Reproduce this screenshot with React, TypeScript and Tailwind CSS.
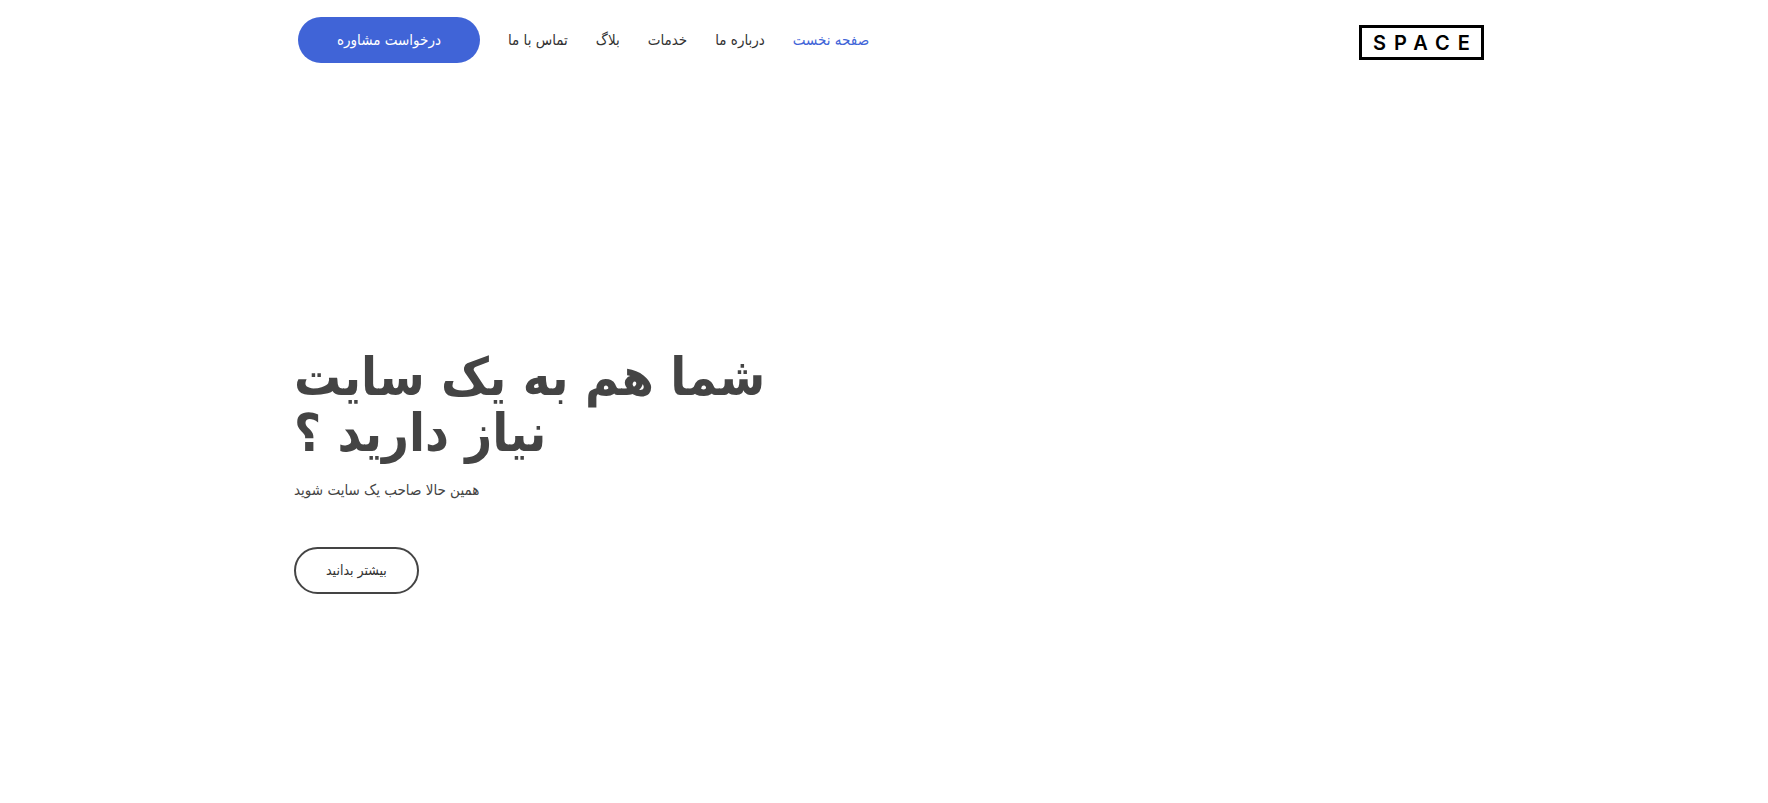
import React from 'react';

const links = [
  { title: 'صفحه نخست', active: true },
  { title: 'درباره ما' },
  { title: 'خدمات' },
  { title: 'بلاگ' },
  { title: 'تماس با ما' },
];

const Header = () => {
  return (
    <header className="flex items-start justify-between pt-[17px]">
      <a
        href="#"
        dir="ltr"
        className="mt-2 flex h-[35px] w-[125px] items-center justify-center border-3 border-black pl-2 font-['Inter'] text-xl font-semibold tracking-[8px] text-black"
      >
        SPACE
      </a>

      <div className="flex items-center gap-7 pl-1">
        <nav className="flex items-center gap-7 text-[15px]">
          {links.map((link) => (
            <a key={link.title} href="#" className={link.active ? 'text-[#4064d7]' : 'text-[#333333]'}>
              {link.title}
            </a>
          ))}
        </nav>
        <button className="h-[46px] rounded-full bg-[#4064d7] px-[39px] text-[15px] text-white">درخواست مشاوره</button>
      </div>
    </header>
  );
};

const Hero = () => {
  return (
    <section className="mt-[286px] flex flex-col items-end">
      <div className="flex flex-col items-end">
        <h1 className="text-left text-[52px] leading-[56px] font-bold text-[#444444]">
          شما هم به یک سایت
          <br />
          نیاز دارید ؟
        </h1>
        <p className="mt-[18px] text-[15px] text-[#444444]">همین حالا صاحب یک سایت شوید</p>
        <button className="mt-[45px] h-[47px] rounded-full border-2 border-[#444444] px-[30px] text-sm text-[#333333]">
          بیشتر بدانید
        </button>
      </div>
    </section>
  );
};

const App = () => {
  return (
    <div dir="rtl" className="min-h-screen bg-white font-['DejaVu_Sans_Condensed','DejaVu_Sans',sans-serif]">
      <div className="mx-auto w-full max-w-[1200px] pl-2.5">
        <Header />
        <Hero />
      </div>
    </div>
  );
};

export default App;
